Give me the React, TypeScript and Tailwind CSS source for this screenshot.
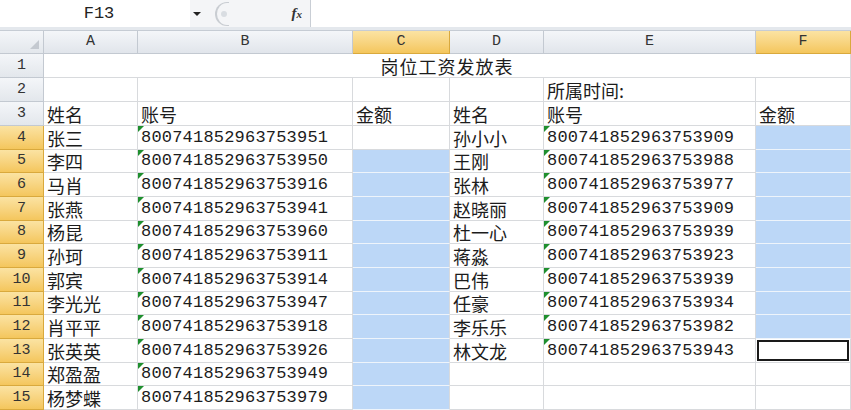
import React from "react";

const cols = [44, 94, 215, 97, 94, 212, 95];
const rowH = [24, 24, 24, 24, 23, 24, 24, 23, 24, 24, 23, 24, 24, 23, 24];

const left = [
  ["张三", "800741852963753951"],
  ["李四", "800741852963753950"],
  ["马肖", "800741852963753916"],
  ["张燕", "800741852963753941"],
  ["杨昆", "800741852963753960"],
  ["孙珂", "800741852963753911"],
  ["郭宾", "800741852963753914"],
  ["李光光", "800741852963753947"],
  ["肖平平", "800741852963753918"],
  ["张英英", "800741852963753926"],
  ["郑盈盈", "800741852963753949"],
  ["杨梦蝶", "800741852963753979"],
];

const right = [
  ["孙小小", "800741852963753909"],
  ["王刚", "800741852963753988"],
  ["张林", "800741852963753977"],
  ["赵晓丽", "800741852963753909"],
  ["杜一心", "800741852963753939"],
  ["蒋淼", "800741852963753923"],
  ["巴伟", "800741852963753939"],
  ["任豪", "800741852963753934"],
  ["李乐乐", "800741852963753982"],
  ["林文龙", "800741852963753943"],
];

const cjk = "font-[Noto_Sans_CJK_SC] text-[18px] leading-[20px]";
const mono = "font-[Liberation_Mono] text-[17px] leading-[20px] tracking-[0.2px]";

function Cell({ children, className = "", flag = false }: { children?: React.ReactNode; className?: string; flag?: boolean }) {
  return (
    <div className={`relative flex items-end whitespace-nowrap border-r border-b border-[#d8dadd] pl-[3px] pb-[1px] text-[#1c1c1c] ${className}`}>
      {flag && (
        <span className="absolute left-0 top-0 h-0 w-0 border-t-[6px] border-r-[6px] border-t-[#1f8f2e] border-r-transparent" />
      )}
      {children}
    </div>
  );
}

function Blue() {
  return <div className="border-r border-b border-r-[#d8dadd] border-b-[#eef4fb] bg-[#bcd7f7]" />;
}

function RowHead({ n, sel }: { n: number; sel: boolean }) {
  return (
    <div
      className={`flex items-center justify-center border-r border-b font-[Liberation_Mono] text-[15px] leading-[18px] text-[#333] ${
        sel
          ? "border-[#d9a93d] bg-gradient-to-b from-[#fbe3a2] to-[#f4c65c]"
          : "border-[#c3c9d1] bg-gradient-to-b from-[#f4f6f9] to-[#e3e7ec]"
      }`}
    >
      {n}
    </div>
  );
}

function ColHead({ label, sel }: { label: string; sel: boolean }) {
  return (
    <div
      className={`flex items-center justify-center border-r border-b font-[Liberation_Mono] text-[15px] leading-[18px] text-[#333] ${
        sel
          ? "border-[#d9a93d] bg-gradient-to-b from-[#fbe3a2] to-[#f4c65c]"
          : "border-[#c3c9d1] bg-gradient-to-b from-[#f4f6f9] to-[#e1e5eb]"
      }`}
    >
      {label}
    </div>
  );
}

export default function App() {
  const rows: React.ReactNode[] = [];

  // row 1 : merged title
  rows.push(
    <RowHead key="h1" n={1} sel={false} />,
    <div key="t1" className={`col-span-6 flex items-end justify-center border-r border-b border-[#d8dadd] pb-[1px] ${cjk} text-[#1c1c1c] tracking-[1px]`}>
      岗位工资发放表
    </div>
  );

  // row 2
  rows.push(
    <RowHead key="h2" n={2} sel={false} />,
    <Cell key="a2" />,
    <Cell key="b2" />,
    <Cell key="c2" />,
    <Cell key="d2" />,
    <Cell key="e2" className={cjk}>所属时间:</Cell>,
    <Cell key="f2" />
  );

  // row 3
  rows.push(
    <RowHead key="h3" n={3} sel={false} />,
    <Cell key="a3" className={cjk}>姓名</Cell>,
    <Cell key="b3" className={cjk}>账号</Cell>,
    <Cell key="c3" className={cjk}>金额</Cell>,
    <Cell key="d3" className={cjk}>姓名</Cell>,
    <Cell key="e3" className={cjk}>账号</Cell>,
    <Cell key="f3" className={cjk}>金额</Cell>
  );

  for (let i = 0; i < 12; i++) {
    const n = i + 4;
    const l = left[i];
    const r = right[i];
    rows.push(<RowHead key={`h${n}`} n={n} sel={true} />);
    rows.push(<Cell key={`a${n}`} className={cjk}>{l[0]}</Cell>);
    rows.push(<Cell key={`b${n}`} flag className={mono}>{l[1]}</Cell>);
    rows.push(n === 4 ? <Cell key={`c${n}`} /> : <Blue key={`c${n}`} />);
    rows.push(<Cell key={`d${n}`} className={cjk}>{r ? r[0] : ""}</Cell>);
    rows.push(
      <Cell key={`e${n}`} flag={!!r} className={mono}>
        {r ? r[1] : ""}
      </Cell>
    );
    if (n <= 12) rows.push(<Blue key={`f${n}`} />);
    else if (n === 13)
      rows.push(
        <div key="f13" className="border-r border-b border-[#d8dadd] bg-white">
          <div className="mt-[1px] ml-[1px] h-[21px] w-[92px] border-2 border-[#1a1a1a]" />
        </div>
      );
    else rows.push(<Cell key={`f${n}`} />);
  }

  return (
    <div className="h-[410px] w-[851px] overflow-hidden bg-white select-none">
      {/* formula bar */}
      <div className="flex h-[31px] border-b border-[#c6ccd4] bg-[#e4e8ed] pb-[3px]">
        <div className="flex w-[190px] items-center justify-center bg-white pl-[8px] font-[Liberation_Mono] text-[17px] text-[#222]">F13</div>
        <div className="relative flex w-[121px] items-center border-r border-[#c9ced5] bg-[#f4f5f7]">
          <span className="ml-[3px] h-0 w-0 border-x-[4px] border-t-[4px] border-x-transparent border-t-[#222]" />
          <span className="ml-[14px] h-[24px] w-[14px] rounded-l-full border-l-2 border-y border-[#c9cdd2]" />
          <span className="-ml-[8px] h-[6px] w-[6px] rounded-full bg-[#d9dde2]" />
          <span className="ml-auto mr-[8px] font-[Liberation_Serif] text-[15px] italic font-bold text-[#333]">
            f<span className="text-[11px]">x</span>
          </span>
        </div>
        <div className="flex-1 bg-white" />
      </div>

      {/* column header + grid */}
      <div
        className="grid"
        style={{
          gridTemplateColumns: cols.map((c) => `${c}px`).join(" "),
          gridTemplateRows: ["23px", ...rowH.map((h) => `${h}px`)].join(" "),
        }}
      >
        <div className="relative border-r border-b border-[#c3c9d1] bg-gradient-to-b from-[#f4f6f9] to-[#e3e7ec]">
          <span className="absolute right-[4px] bottom-[4px] h-0 w-0 border-b-[9px] border-l-[9px] border-b-[#c4c9d0] border-l-transparent" />
        </div>
        <ColHead label="A" sel={false} />
        <ColHead label="B" sel={false} />
        <ColHead label="C" sel={true} />
        <ColHead label="D" sel={false} />
        <ColHead label="E" sel={false} />
        <ColHead label="F" sel={true} />
        {rows}
      </div>
    </div>
  );
}
